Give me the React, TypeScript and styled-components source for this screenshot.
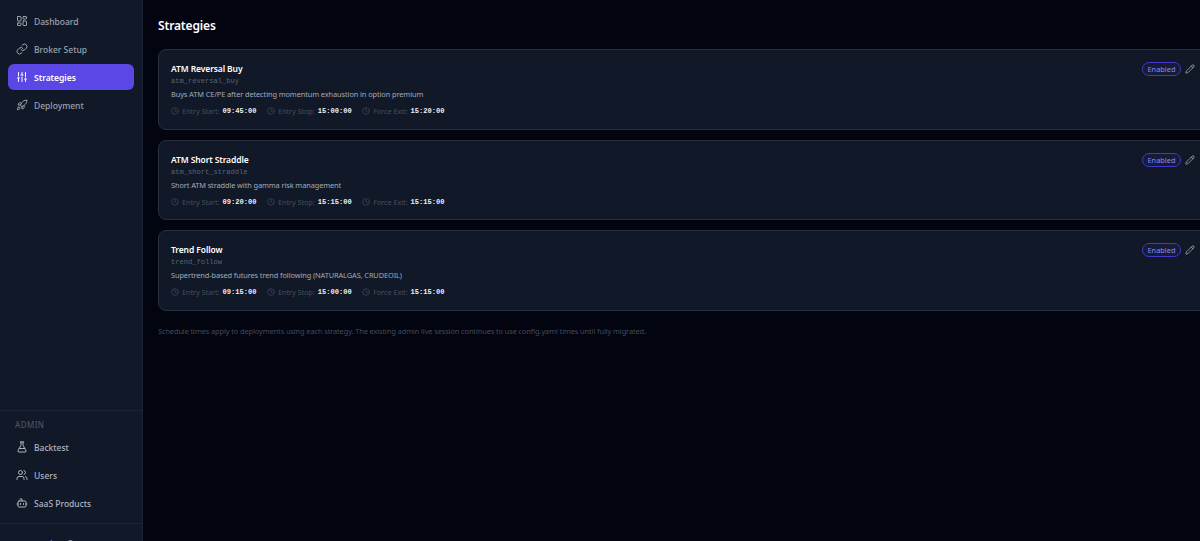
import React from "react";
import styled, { createGlobalStyle } from "styled-components";
import { LayoutDashboard, Link, SlidersVertical, Rocket, FlaskConical, Users, Bot, Clock, Pencil } from "lucide-react";

const Global = createGlobalStyle`
  html, body { margin: 0; padding: 0; height: 100%; overflow: hidden; background: #020410; }
  * { box-sizing: border-box; }
  body { font-family: "Noto Sans", "Liberation Sans", sans-serif; }
`;
const Shell = styled.div`display: flex; width: 1200px; height: 541px; overflow: hidden; background: #020410;`;
const Sidebar = styled.aside`
  width: 143px; flex: none; background: #111827; border-right: 1px solid #1c2433;
  display: flex; flex-direction: column; height: 541px; overflow: hidden; padding-top: 8px;
`;
const NavGroup = styled.nav`display: flex; flex-direction: column; gap: 2px; padding: 0 8px; flex: 1;`;
const NavItem = styled.a<{ $active?: boolean }>`
  display: flex; align-items: center; gap: 6px; height: 26px; padding: 0 8px; border-radius: 6px;
  font-size: 8.5px; font-weight: ${p => (p.$active ? 600 : 500)}; color: ${p => (p.$active ? "#fff" : "#9ca3af")};
  background: ${p => (p.$active ? "#5b46e6" : "transparent")};
  svg { flex: none; }
`;
const AdminSection = styled.div`
  border-top: 1px solid #1c2433; padding: 8px 8px 0; height: 113px; display: flex; flex-direction: column; gap: 2px;
  flex: none;
`;
const AdminLabel = styled.div`
  font-size: 8px; font-weight: 500; letter-spacing: 0.4px; color: #4b5563; padding: 0 7px; height: 11px; line-height: 11px;
  margin-bottom: 2px;
`;
const AdminItem = styled(NavItem)`color: #adb5c2;`;
const Footer = styled.div`
  border-top: 1px solid #1c2433; height: 18px; flex: none; padding-top: 14px; padding-left: 50px; font-size: 8.5px; line-height: 12px; color: #9ca3af; overflow: hidden;
`;
const Main = styled.main`flex: 1; min-width: 0; padding: 16px 0 0 15px; overflow: hidden;`;
const Title = styled.h1`margin: 0 0 13px; font-size: 12px; letter-spacing: -0.15px; line-height: 20px; font-weight: 600; color: #fff;`;
const List = styled.div`display: flex; flex-direction: column; gap: 10px; width: 1060px;`;
const Card = styled.article`
  display: flex; justify-content: space-between; height: 80.5px; padding: 13px 22px 0 12px;
  background: #111827; border: 1px solid #273040; border-radius: 8px;
`;
const Info = styled.div`display: flex; flex-direction: column;`;
const Name = styled.div`font-size: 8.5px; letter-spacing: -0.1px; line-height: 12px; font-weight: 600; color: #fff;`;
const Code = styled.code`
  font-family: "Liberation Mono", "DejaVu Sans Mono", monospace; font-size: 7.08px; line-height: 11px; color: #5a6473; margin-top: 1px;
`;
const Desc = styled.div`font-size: 7.4px; letter-spacing: -0.1px; line-height: 12px; color: #a3abb8; margin-top: 1px;`;
const Times = styled.div`display: flex; gap: 10.5px; margin-top: 5px; height: 12px; align-items: center;`;
const TimeItem = styled.div`display: flex; align-items: center; gap: 3px; font-size: 7.4px; letter-spacing: -0.1px; color: #444d5c; svg { flex: none; }`;
const TimeValue = styled.span`
  font-family: "Liberation Mono", "DejaVu Sans Mono", monospace; font-size: 7.08px; letter-spacing: 0; font-weight: 700; color: #eef0f4;
`;
const Actions = styled.div`display: flex; align-items: center; gap: 4px; height: 14px; margin-top: -1px; color: #9ca3af;`;
const Badge = styled.span`
  display: flex; align-items: center; height: 14px; padding: 0 4.5px; border-radius: 7px; border: 1px solid #4338ca;
  font-size: 7.4px; color: #818cf8; background: rgba(67,56,202,0.1);
`;
const Note = styled.p`margin: 14px 0 0; font-size: 7.4px; letter-spacing: -0.1px; line-height: 12px; color: #424b5a;`;

const nav = [
  { label: "Dashboard", Icon: LayoutDashboard },
  { label: "Broker Setup", Icon: Link },
  { label: "Strategies", Icon: SlidersVertical, active: true },
  { label: "Deployment", Icon: Rocket },
];
const admin = [
  { label: "Backtest", Icon: FlaskConical },
  { label: "Users", Icon: Users },
  { label: "SaaS Products", Icon: Bot },
];
const strategies = [
  { name: "ATM Reversal Buy", code: "atm_reversal_buy", desc: "Buys ATM CE/PE after detecting momentum exhaustion in option premium", start: "09:45:00", stop: "15:00:00", exit: "15:20:00" },
  { name: "ATM Short Straddle", code: "atm_short_straddle", desc: "Short ATM straddle with gamma risk management", start: "09:20:00", stop: "15:15:00", exit: "15:15:00" },
  { name: "Trend Follow", code: "trend_follow", desc: "Supertrend-based futures trend following (NATURALGAS, CRUDEOIL)", start: "09:15:00", stop: "15:00:00", exit: "15:15:00" },
];

function Time({ label, value }: { label: string; value: string }) {
  return (
    <TimeItem>
      <Clock size={8} />
      <span>{label}:</span>
      <TimeValue>{value}</TimeValue>
    </TimeItem>
  );
}

export default function App() {
  return (
    <Shell>
      <Global />
      <Sidebar>
        <NavGroup>
          {nav.map(({ label, Icon, active }) => (
            <NavItem key={label} $active={active}><Icon size={12} />{label}</NavItem>
          ))}
        </NavGroup>
        <AdminSection>
          <AdminLabel>ADMIN</AdminLabel>
          {admin.map(({ label, Icon }) => (
            <AdminItem key={label}><Icon size={12} />{label}</AdminItem>
          ))}
        </AdminSection>
        <Footer>Log Out</Footer>
      </Sidebar>
      <Main>
        <Title>Strategies</Title>
        <List>
          {strategies.map(s => (
            <Card key={s.code}>
              <Info>
                <Name>{s.name}</Name>
                <Code>{s.code}</Code>
                <Desc>{s.desc}</Desc>
                <Times>
                  <Time label="Entry Start" value={s.start} />
                  <Time label="Entry Stop" value={s.stop} />
                  <Time label="Force Exit" value={s.exit} />
                </Times>
              </Info>
              <Actions>
                <Badge>Enabled</Badge>
                <Pencil size={10} />
              </Actions>
            </Card>
          ))}
        </List>
        <Note>Schedule times apply to deployments using each strategy. The existing admin live session continues to use config.yaml times until fully migrated.</Note>
      </Main>
    </Shell>
  );
}
